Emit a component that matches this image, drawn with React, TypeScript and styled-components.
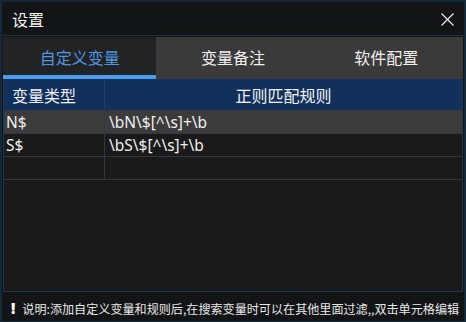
import React from "react";
import styled, { createGlobalStyle } from "styled-components";

const Global = createGlobalStyle`
  html, body { margin: 0; padding: 0; background: #121416; }
  body { font-family: "Noto Sans CJK SC", "Noto Sans", sans-serif; }
  * { box-sizing: border-box; }
`;

const Window = styled.div`
  width: 466px;
  height: 322px;
  border: 2px solid #15283a;
  border-bottom-width: 1px;
  background: #131416;
  display: flex;
  flex-direction: column;
  overflow: hidden;
`;

const TitleBar = styled.div`
  height: 34px;
  flex: none;
  display: flex;
  align-items: center;
  justify-content: space-between;
  padding: 0 10px 0 10px;
  background: #131416;
  border-bottom: 1px solid #1b3147;
  color: #f2f2f2;
  font-size: 16px;
`;

const CloseBtn = styled.div`
  width: 14px;
  height: 14px;
  display: flex;
  align-items: center;
  justify-content: center;
  margin-top: 2px;
`;

const TabBar = styled.div`
  display: flex;
  flex: none;
  padding: 1px 1px 0 1px;
`;

const Tab = styled.div<{ $active?: boolean }>`
  flex: 1;
  height: 42px;
  display: flex;
  align-items: center;
  justify-content: center;
  font-size: 16px;
  padding-top: 1px;
  background: ${(p) => (p.$active ? "#222325" : "#3a3a3a")};
  color: ${(p) => (p.$active ? "#4f96e0" : "#f0f0f0")};
  border-bottom: 4px solid ${(p) => (p.$active ? "#4a9cf0" : "#3a3a3a")};
`;

const TableBox = styled.div`
  flex: 1;
  margin: 0 1px;
  border: 1px solid #1d3954;
  border-top: none;
  background: #1a1a1a;
  display: flex;
  flex-direction: column;
`;

const Row = styled.div<{ $bg: string; $h: number }>`
  display: grid;
  grid-template-columns: 101px 1fr;
  height: ${(p) => p.$h}px;
  background: ${(p) => p.$bg};
  border-bottom: 1px solid #33383e;
`;

const HeadCell = styled.div<{ $center?: boolean }>`
  display: flex;
  align-items: center;
  justify-content: ${(p) => (p.$center ? "center" : "flex-start")};
  padding-left: ${(p) => (p.$center ? "0" : "8px")};
  color: #f2f2f2;
  font-size: 16px;
  border-right: ${(p) => (p.$center ? "none" : "1px solid #263e5c")};
`;

const Cell = styled.div<{ $first?: boolean }>`
  display: flex;
  align-items: center;
  padding-left: ${(p) => (p.$first ? "2px" : "4px")};
  color: #f0f0f0;
  font-family: "Noto Sans", "Noto Sans CJK SC", sans-serif;
  font-size: 15.5px;
  border-right: ${(p) => (p.$first ? "1px solid #33383e" : "none")};
`;

const Footer = styled.div`
  height: 29px;
  flex: none;
  display: flex;
  align-items: center;
  padding: 3px 0 0 9px;
  gap: 7px;
  color: #e8e8e8;
  font-size: 12.1px;
  white-space: nowrap;
`;

const Bang = styled.span`
  font-family: "Noto Sans", sans-serif;
  font-weight: 900;
  font-size: 15px;
  color: #ffffff;
`;

const rows = [
  { t: "N$", r: "\\bN\\$[^\\s]+\\b", bg: "#3b3b3b" },
  { t: "S$", r: "\\bS\\$[^\\s]+\\b", bg: "#1a1a1a" },
  { t: "", r: "", bg: "#1a1a1a" },
];

export default function App() {
  return (
    <>
      <Global />
      <Window>
        <TitleBar>
          <span>设置</span>
          <CloseBtn>
            <svg width="13" height="13" viewBox="0 0 13 13">
              <path d="M0.5 0.5 L12.5 12.5 M12.5 0.5 L0.5 12.5" stroke="#f4f4f4" strokeWidth="1.1" />
            </svg>
          </CloseBtn>
        </TitleBar>
        <TabBar>
          <Tab $active>自定义变量</Tab>
          <Tab>变量备注</Tab>
          <Tab>软件配置</Tab>
        </TabBar>
        <TableBox>
          <Row $bg="#11305c" $h={32}>
            <HeadCell>变量类型</HeadCell>
            <HeadCell $center>正则匹配规则</HeadCell>
          </Row>
          {rows.map((r, i) => (
            <Row key={i} $bg={r.bg} $h={23}>
              <Cell $first>{r.t}</Cell>
              <Cell>{r.r}</Cell>
            </Row>
          ))}
        </TableBox>
        <Footer>
          <Bang>!</Bang>
          <span>说明:添加自定义变量和规则后,在搜索变量时可以在其他里面过滤,,双击单元格编辑</span>
        </Footer>
      </Window>
    </>
  );
}
